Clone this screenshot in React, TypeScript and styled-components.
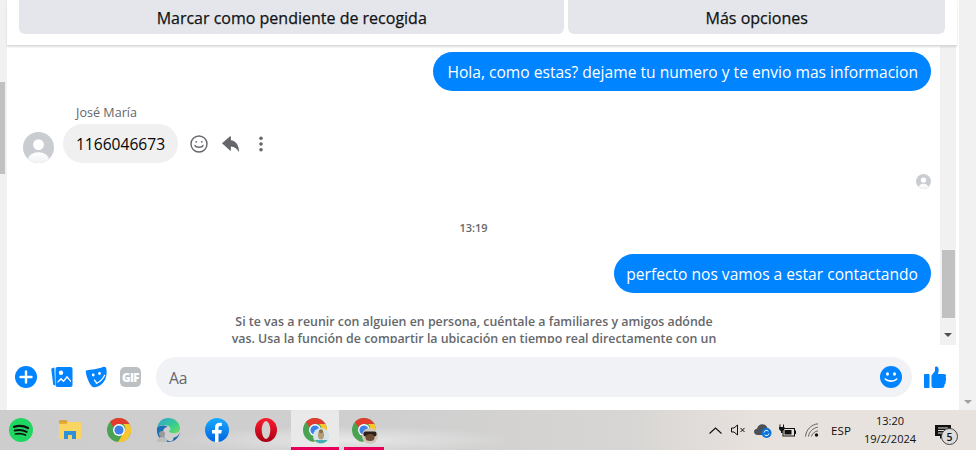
import React from "react";
import styled, { createGlobalStyle } from "styled-components";

const Global = createGlobalStyle`
  html, body { margin: 0; padding: 0; height: 450px; overflow: hidden; background: #fff; }
  #root { height: 450px; }
  * { box-sizing: border-box; }
  body { font-family: "Open Sans", "Noto Sans", "Liberation Sans", sans-serif; }
`;

const Page = styled.div`
  width: 976px; height: 450px; display: flex; flex-direction: column; overflow: hidden;
`;
const Browser = styled.div`
  height: 410px; display: flex; flex: none;
`;
const LeftRail = styled.div`
  width: 7px; background: #f1f1f1; padding-top: 82px; flex: none;
`;
const LeftThumb = styled.div`
  width: 5px; height: 92px; background: #c1c1c1;
`;
const OuterRail = styled.div`
  width: 17px; margin-left: 2px; background: #f1f1f1; flex: none; display: flex;
  flex-direction: column; justify-content: flex-end; align-items: center; padding-bottom: 6px;
`;
const ArrowDown = styled.div<{ $c: string }>`
  width: 0; height: 0; border-left: 4px solid transparent; border-right: 4px solid transparent;
  border-top: 4px solid ${(p) => p.$c};
`;
const Panel = styled.div`
  width: 950px; flex: none; display: flex; flex-direction: column; background: #fff;
`;
const Actions = styled.div`
  height: 46px; flex: none; display: flex; gap: 4px; padding: 0 12px 0 12px;
  border-bottom: 1px solid #d8d8d8; box-shadow: 0 1px 2px rgba(0,0,0,.12); position: relative;
`;
const ActionButton = styled.div<{ $w: number }>`
  width: ${(p) => p.$w}px; height: 34px; background: #e4e6eb; border-radius: 0 0 6px 6px;
  display: flex; align-items: center; justify-content: center;
  font-size: 16px; font-weight: 500; color: #111316; padding-top: 1px; -webkit-text-stroke: .25px #111316;
`;
const Middle = styled.div`
  height: 299px; flex: none; display: flex; align-items: flex-start; padding-right: 1px;
`;
const Thread = styled.div`
  width: 933px; height: 297px; flex: none; overflow: hidden; display: flex; flex-direction: column;
`;
const ScrollRail = styled.div`
  width: 17px; height: 299px; background: #f1f1f1; display: flex; flex-direction: column; align-items: center; padding-top: 204px;
`;
const ScrollThumb = styled.div`
  width: 13px; height: 68px; background: #c1c1c1;
`;
const ScrollArrow = styled.div`
  margin-top: 15px;
`;
const OutRow = styled.div<{ $top: number }>`
  display: flex; justify-content: flex-end; padding-right: 9px; margin-top: ${(p) => p.$top}px; flex: none;
`;
const OutBubble = styled.div<{ $left: number }>`
  height: 39px; border-radius: 20px; background: #0084ff; color: #fff; font-size: 15.6px;
  display: flex; align-items: center; padding: 0 13px 0 ${(p) => p.$left}px; white-space: nowrap;
`;
const SenderName = styled.div`
  font-size: 12.6px; color: #65676b; margin: 14px 0 0 69px; line-height: 16px; flex: none;
`;
const InRow = styled.div`
  display: flex; align-items: flex-end; margin: 3px 0 0 16px; flex: none;
`;
const InBubble = styled.div`
  height: 39px; width: 115px; margin-left: 9px; border-radius: 20px; background: #f0f0f0; color: #050505;
  font-size: 15.6px; display: flex; align-items: center; justify-content: center;
`;
const MsgTools = styled.div`
  display: flex; align-items: center; height: 39px; margin-left: 11px; gap: 11px; color: #65676b;
`;
const ToolSlot = styled.div`
  width: 20px; display: flex; justify-content: center; align-items: center;
`;
const SeenRow = styled.div`
  display: flex; justify-content: flex-end; padding-right: 9px; margin-top: 11px; flex: none; height: 15px;
`;
const TimeStamp = styled.div`
  text-align: center; font-size: 11px; font-weight: 600; color: #65676b; margin-top: 31px; line-height: 16px; flex: none;
`;
const Notice = styled.div`
  width: 490px; margin: 20px 0 0 222px; text-align: center; font-size: 12.4px; font-weight: 600;
  color: #65676b; line-height: 17px; flex: none; white-space: nowrap;
`;
const Composer = styled.div`
  height: 65px; flex: none; display: flex; align-items: center; padding: 0 0 1px 8px;
`;
const ComposerIcon = styled.div<{ $w: number; $ml: number }>`
  width: ${(p) => p.$w}px; margin-left: ${(p) => p.$ml}px; display: flex; align-items: center; justify-content: center; height: 24px;
`;
const GifTile = styled.div`
  width: 21px; height: 20px; border-radius: 5px; background: #bcc0c4; color: #fff; font-size: 11.5px;
  font-weight: 800; display: flex; align-items: center; justify-content: center; letter-spacing: -.6px;
`;
const InputBox = styled.div`
  width: 756px; height: 40px; margin-left: 15px; border-radius: 20px; background: #f0f2f5;
  display: flex; align-items: center; justify-content: space-between; padding: 0 10px 0 13px;
  color: #65676b; font-size: 15.6px;
`;
const Placeholder = styled.span`
  padding-top: 2px;
`;
const Taskbar = styled.div`
  height: 40px; flex: none; display: flex; align-items: stretch; justify-content: space-between;
  background:
    radial-gradient(170px 14px at 345px 30px, rgba(255,255,255,.5), rgba(255,255,255,0) 100%),
    linear-gradient(90deg, #cdcdcd 0%, #cfcfcf 40%, #d8d6d4 65%, #e8e2de 78%, #e8e2de 100%);
`;
const TaskApps = styled.div`
  display: flex;
`;
const TaskApp = styled.div<{ $active?: boolean; $w?: number; $bar?: boolean }>`
  width: ${(p) => p.$w ?? 49}px; height: 40px; display: flex; align-items: center; justify-content: center;
  padding-top: 3px; background: ${(p) => (p.$active ? "#e9e9e9" : "transparent")};
  border-bottom: 3px solid ${(p) => (p.$bar ? "#e6005c" : "transparent")};
`;
const SpotifySlot = styled(TaskApp)`
  padding-right: 3px;
`;
const Tray = styled.div`
  display: flex; align-items: center; padding-right: 1px; color: #111;
`;
const TrayItem = styled.div<{ $w: number }>`
  width: ${(p) => p.$w}px; display: flex; justify-content: center; align-items: center;
`;
const TrayText = styled.div`
  font-size: 11.6px; color: #111;
`;
const Clock = styled.div`
  width: 68px; text-align: center; font-size: 11px; line-height: 18px; color: #111;
`;
const Notify = styled.div`
  width: 40px; height: 30px; position: relative; margin-left: 11px; padding-top: 8px;
`;
const NotifyBadge = styled.div`
  position: absolute; left: 6px; top: 13px; width: 17px; height: 17px; border-radius: 50%;
  border: 1px solid #444; background: #ddd; font-size: 10.5px; font-weight: 600; display: flex;
  align-items: center; justify-content: center; color: #111;
`;
const ChromeSvg = styled.svg`
  overflow: visible;
`;

const Person = ({ size }: { size: number }) => (
  <svg width={size} height={size} viewBox="0 0 32 32">
    <defs>
      <linearGradient id={`pf${size}`} x1="0" y1="0" x2="0" y2="1">
        <stop offset="0" stopColor="#fff" /><stop offset="1" stopColor="#e9ebee" />
      </linearGradient>
      <clipPath id={`pc${size}`}><circle cx="16" cy="16" r="16" /></clipPath>
    </defs>
    <circle cx="16" cy="16" r="16" fill="#c9ccd1" />
    <g clipPath={`url(#pc${size})`}>
      <circle cx="16" cy="13" r="5.6" fill="#fff" />
      <ellipse cx="16" cy="29" rx="11" ry="8" fill={`url(#pf${size})`} />
    </g>
  </svg>
);

const Smile = () => (
  <svg width="18" height="18" viewBox="0 0 18 18" fill="none" stroke="#65676b" strokeWidth="1.4">
    <circle cx="9" cy="9" r="8" />
    <path d="M5 10.5c1 2.4 7 2.4 8 0" strokeLinecap="round" />
    <circle cx="6.2" cy="6.8" r=".9" fill="#65676b" stroke="none" />
    <circle cx="11.8" cy="6.8" r=".9" fill="#65676b" stroke="none" />
  </svg>
);
const Reply = () => (
  <svg width="17" height="16" viewBox="0 0 17 16" fill="#65676b">
    <path d="M0 7.200 8 .3c.4-.3.9 0 .9.500V4.200C13.500 4.500 17 9 17 15.500c0 .3-.3.400-.5.100C14.800 12.500 12.500 10.600 8.900 10.400v3.700c0 .5-.5.800-.9.500z" />
  </svg>
);
const Kebab = () => (
  <svg width="4" height="16" viewBox="0 0 4 16" fill="#65676b">
    <circle cx="2" cy="2.2" r="1.8" /><circle cx="2" cy="8" r="1.8" /><circle cx="2" cy="13.8" r="1.8" />
  </svg>
);
const Plus = () => (
  <svg width="22" height="22" viewBox="0 0 22 22">
    <circle cx="11" cy="11" r="11" fill="#0084ff" />
    <path d="M11 5.5v11M5.5 11h11" stroke="#fff" strokeWidth="2.4" strokeLinecap="round" />
  </svg>
);
const Photos = () => (
  <svg width="22" height="22" viewBox="0 0 22 22">
    <path d="M3.4 1.5 1 2.3c-.5.2-.8.7-.7 1.3l1.9 15c.1.5.5.8 1 .7l.9-.1z" fill="#0084ff" />
    <rect x="4.5" y="1" width="17" height="20" rx="2" fill="#0084ff" />
    <circle cx="10" cy="6.7" r="2.2" fill="#fff" />
    <path d="M6.5 15.500l3.500-3.800 2.500 2.500 3.500-4.400 4 5v1.400l-4-4.200-3.400 4.300-2.600-2.400-3.500 3.200z" fill="#fff" />
  </svg>
);
const Sticker = () => (
  <svg width="22" height="22" viewBox="0 0 22 22">
    <path d="M2 4.200C6 4 13 2.800 18 1c1.800-.6 3 .2 3.300 1.600.6 3.500.4 7-.8 10.200C18.600 17.500 14 21 9.500 21.300 8.400 21.400 7.500 21 6.700 20.200 4.300 17.600 1.800 12 .8 6 .6 5 1 4.300 2 4.200z" fill="#0084ff" />
    <circle cx="8.200" cy="9" r="1.400" fill="#fff" />
    <circle cx="14.500" cy="7.500" r="1.400" fill="#fff" />
    <path d="M10.800 17.500c3.800-1.200 7-4.300 9-8.500" stroke="#fff" strokeWidth="1.300" fill="none" />
    <path d="M9.500 14c.5 1.500 1.300 2.400 2.500 2.800" stroke="#fff" strokeWidth="1.300" fill="none" strokeLinecap="round" />
  </svg>
);
const BlueSmile = () => (
  <svg width="22" height="22" viewBox="0 0 22 22">
    <circle cx="11" cy="11" r="11" fill="#0084ff" />
    <ellipse cx="7.500" cy="8" rx="1.500" ry="1.800" fill="#fff" />
    <ellipse cx="14.500" cy="8" rx="1.500" ry="1.800" fill="#fff" />
    <path d="M5.200 13c2.500 2.800 9 2.800 11.600 0" stroke="#fff" strokeWidth="1.600" fill="none" strokeLinecap="round" />
  </svg>
);
const ThumbUp = () => (
  <svg width="22" height="22" viewBox="0 0 22 22" fill="#0084ff">
    <rect x="0" y="8" width="5.500" height="14" rx=".8" />
    <path d="M7.500 9.500 11 5V1.500C11 .3 14-.6 14.600 3c.3 2-.4 3.700-.6 5h6c2 0 2.500 2 1.500 3 1 1 1 3-.1 4 .6 1.500 0 3-1 3.500.4 1.500-.5 3.500-2.400 3.500H10c-1.500 0-2.500-1-2.500-2z" />
  </svg>
);

const Spotify = () => (
  <svg width="24" height="24" viewBox="0 0 24 24" fill="none" stroke="#111" strokeLinecap="round">
    <circle cx="12" cy="12" r="12" fill="#1ed760" stroke="none" />
    <path d="M5 8.800c4.500-1.300 9.800-1 14 1.200" strokeWidth="2.300" />
    <path d="M5.800 12.500c4-1 8.300-.6 11.900 1.300" strokeWidth="2" />
    <path d="M6.500 16c3.500-.8 7-.5 10 1.100" strokeWidth="1.700" />
  </svg>
);
const Folder = () => (
  <svg width="22" height="20" viewBox="0 0 22 20">
    <path d="M0 1.500C0 .7.500.2 1.200.2h6l1.800 2h-9z" fill="#d79c2c" />
    <rect x="0" y="2" width="22" height="17" rx="1" fill="#fbd561" />
    <path d="M0 2h9L7.500 4H0z" fill="#e8ad36" />
    <rect x="5" y="11" width="12" height="8" fill="#2f8fd8" />
    <rect x="9" y="15" width="4" height="4" fill="#fbd561" />
  </svg>
);
const ChromeMark = () => (
  <>
    <circle cx="12" cy="12" r="12" fill="#4aa352" />
    <path d="M12 0a12 12 0 0 1 10.400 6H12a6 6 0 0 0-5.500 3.500L3 3.800A12 12 0 0 1 12 0z" fill="#e33b2e" />
    <path d="M22.400 6A12 12 0 0 1 11 24l5.500-9a6 6 0 0 0-.3-9z" fill="#fbc52d" />
    <circle cx="12" cy="12" r="6" fill="#fff" />
    <circle cx="12" cy="12" r="4.600" fill="#3f7fe8" />
  </>
);
const Chrome = () => (
  <svg width="24" height="24" viewBox="0 0 24 24"><ChromeMark /></svg>
);
const Edge = () => (
  <svg width="24" height="24" viewBox="0 0 24 24">
    <defs>
      <linearGradient id="eg" x1="0" y1="0" x2="1" y2="1">
        <stop offset="0" stopColor="#2d9fd9" /><stop offset=".6" stopColor="#3ad08a" /><stop offset="1" stopColor="#72dc5e" />
      </linearGradient>
    </defs>
    <path d="M1 10C2 4 6.500 0 12 0c7 0 12 5 12 10.500 0 3.200-3 4.700-6 4.700-3 0-5-.9-5-2.200 2-1 2-3.700-.5-5C8 6 3 7 1 10z" fill="url(#eg)" />
    <path d="M1 10c2.500-3 8-3 10.500-1C8 9 6 13 7.500 17.500c1 3 4 6 8.500 6-1.200.3-2.700.5-4 .5C5 24 0 18 1 10z" fill="#1b6fb5" />
    <path d="M24 14c-1 6-6 10-11 9.700 3 0 5-2 4.500-4.200 3 0 5.500-2.500 6.500-5.500z" fill="#1464a8" />
    <circle cx="6" cy="16" r="3" fill="#9a9a9a" />
    <path d="M1 24c0-3.500 2-5 5-5s5 1.500 5 5z" fill="#bdbdbd" />
  </svg>
);
const Facebook = () => (
  <svg width="24" height="24" viewBox="0 0 24 24">
    <defs>
      <linearGradient id="fb" x1="0" y1="0" x2="0" y2="1">
        <stop offset="0" stopColor="#18acfe" /><stop offset="1" stopColor="#0163e0" />
      </linearGradient>
    </defs>
    <circle cx="12" cy="12" r="12" fill="url(#fb)" />
    <path d="M10 24v-8.500H7V12h3V9.300C10 6.300 11.800 4.700 14.500 4.700c1.300 0 2.400.2 2.400.2v3h-1.500c-1.500 0-1.900.9-1.900 1.800V12h3.300l-.5 3.500h-2.800V24z" fill="#fff" />
  </svg>
);
const Opera = () => (
  <svg width="22" height="24" viewBox="0 0 22 24">
    <defs>
      <linearGradient id="op" x1="0" y1="0" x2="0" y2="1">
        <stop offset="0" stopColor="#ff1b2d" /><stop offset="1" stopColor="#a70014" />
      </linearGradient>
    </defs>
    <ellipse cx="11" cy="12" rx="11" ry="12" fill="url(#op)" />
    <ellipse cx="11" cy="12" rx="4.300" ry="9" fill="#d4d0ce" />
  </svg>
);
const ChromeWithBadge = ({ kind }: { kind: "a" | "b" }) => (
  <ChromeSvg width="24" height="24" viewBox="0 0 24 24">
    <ChromeMark />
    <circle cx="18" cy="18" r="8" fill={kind === "a" ? "#d5e4e6" : "#cfc9bd"} />
    {kind === "a" ? (
      <>
        <path d="M11.500 22h13a8 8 0 0 1-13 0z" fill="#45b0b4" />
        <ellipse cx="18" cy="17" rx="3" ry="4.500" fill="#b59a74" />
        <circle cx="18" cy="13.300" r="2" fill="#8a6f4d" />
      </>
    ) : (
      <>
        <rect x="11.500" y="13.500" width="13" height="5" rx="2" fill="#2c1f18" />
        <ellipse cx="18" cy="19.500" rx="4.500" ry="3.500" fill="#6d4a33" />
      </>
    )}
  </ChromeSvg>
);

const Chevron = () => (
  <svg width="13" height="7" viewBox="0 0 13 7" fill="none" stroke="#111" strokeWidth="1.100">
    <path d="M.5 6.500 6.500 1l6 5.500" />
  </svg>
);
const Speaker = () => (
  <svg width="15" height="12" viewBox="0 0 15 12" fill="none" stroke="#111" strokeWidth="1">
    <path d="M.5 4h2.500L6.500 1v10L3 8H.5z" />
    <path d="M9.500 4l4 4m0-4-4 4" />
  </svg>
);
const CloudSync = () => (
  <svg width="18" height="15" viewBox="0 0 18 15">
    <path d="M3.500 12C1.500 12 0 10.700 0 8.800 0 7 1.300 5.800 3 5.700 3.600 3 5.700 1.300 8.300 1.300c2.700 0 4.900 1.800 5.300 4.300C15.500 6 16.500 7 16.500 8v1H8v3z" fill="#4b5157" />
    <circle cx="12.500" cy="10" r="5" fill="#0a74da" />
    <path d="M10 9.500a2.600 2.600 0 0 1 4.400-1.300M15 10.500a2.600 2.600 0 0 1-4.400 1.300" stroke="#fff" strokeWidth="1" fill="none" />
  </svg>
);
const BatteryPlug = () => (
  <svg width="17" height="13" viewBox="0 0 17 13">
    <path d="M1 .5v2.500M4.500.5v2.500" stroke="#111" strokeWidth="1" />
    <path d="M0 3h5.500v1.500a2.700 2.700 0 0 1-2 2.500v2H2V7A2.700 2.700 0 0 1 0 4.500z" fill="#111" />
    <rect x="4" y="4.500" width="11.500" height="7.500" fill="none" stroke="#111" strokeWidth="1" />
    <rect x="5.500" y="6" width="7" height="4.500" fill="#111" />
    <rect x="15.500" y="6.500" width="1.500" height="3.500" fill="#111" />
  </svg>
);
const Wifi = () => (
  <svg width="15" height="14" viewBox="0 0 15 14" fill="none" stroke="#555" strokeWidth=".9">
    <path d="M.5 13.500C1 7 6 1.500 13 .8" />
    <path d="M3.500 13.500C4 9 8 4.800 13 4.200" />
    <path d="M6.500 13.500C7 11 9.500 8.300 13 7.800" />
    <circle cx="11.500" cy="12" r="1.700" fill="#111" stroke="none" />
  </svg>
);
const Bubble = () => (
  <svg width="16" height="15" viewBox="0 0 16 15">
    <path d="M0 0h16v11H8l-3 3v-3H0z" fill="#111" />
    <path d="M3 3h10M3 5.500h10M3 8h7" stroke="#e8e2de" strokeWidth="1" />
  </svg>
);

export default function App() {
  return (
    <Page>
      <Global />
      <Browser>
        <LeftRail><LeftThumb /></LeftRail>
        <Panel>
          <Actions>
            <ActionButton $w={546}>Marcar como pendiente de recogida</ActionButton>
            <ActionButton $w={377}>Más opciones</ActionButton>
          </Actions>
          <Middle>
            <Thread>
              <OutRow $top={6}><OutBubble $left={14}>Hola, como estas? dejame tu numero y te envio mas informacion</OutBubble></OutRow>
              <SenderName>José María</SenderName>
              <InRow>
                <Person size={31} />
                <InBubble>1166046673</InBubble>
                <MsgTools>
                  <ToolSlot><Smile /></ToolSlot>
                  <ToolSlot><Reply /></ToolSlot>
                  <ToolSlot><Kebab /></ToolSlot>
                </MsgTools>
              </InRow>
              <SeenRow><Person size={15} /></SeenRow>
              <TimeStamp>13:19</TimeStamp>
              <OutRow $top={18}><OutBubble $left={12}>perfecto nos vamos a estar contactando</OutBubble></OutRow>
              <Notice>
                Si te vas a reunir con alguien en persona, cuéntale a familiares y amigos adónde<br />
                vas. Usa la función de compartir la ubicación en tiempo real directamente con un
              </Notice>
            </Thread>
            <ScrollRail>
              <ScrollThumb />
              <ScrollArrow><ArrowDown $c="#505050" /></ScrollArrow>
            </ScrollRail>
          </Middle>
          <Composer>
            <ComposerIcon $w={22} $ml={0}><Plus /></ComposerIcon>
            <ComposerIcon $w={22} $ml={14}><Photos /></ComposerIcon>
            <ComposerIcon $w={22} $ml={12}><Sticker /></ComposerIcon>
            <ComposerIcon $w={21} $ml={13}><GifTile>GIF</GifTile></ComposerIcon>
            <InputBox><Placeholder>Aa</Placeholder><BlueSmile /></InputBox>
            <ComposerIcon $w={22} $ml={12}><ThumbUp /></ComposerIcon>
          </Composer>
        </Panel>
        <OuterRail><ArrowDown $c="#a0a0a0" /></OuterRail>
      </Browser>
      <Taskbar>
        <TaskApps>
          <SpotifySlot $w={45}><Spotify /></SpotifySlot>
          <TaskApp><Folder /></TaskApp>
          <TaskApp><Chrome /></TaskApp>
          <TaskApp><Edge /></TaskApp>
          <TaskApp><Facebook /></TaskApp>
          <TaskApp><Opera /></TaskApp>
          <TaskApp $w={1} />
          <TaskApp $active $bar $w={48}><ChromeWithBadge kind="a" /></TaskApp>
          <TaskApp $w={5} />
          <TaskApp $bar $w={40}><ChromeWithBadge kind="b" /></TaskApp>
        </TaskApps>
        <Tray>
          <TrayItem $w={22}><Chevron /></TrayItem>
          <TrayItem $w={24}><Speaker /></TrayItem>
          <TrayItem $w={26}><CloudSync /></TrayItem>
          <TrayItem $w={22}><BatteryPlug /></TrayItem>
          <TrayItem $w={28}><Wifi /></TrayItem>
          <TrayItem $w={30}><TrayText>ESP</TrayText></TrayItem>
          <Clock>13:20<br />19/2/2024</Clock>
          <Notify>
            <Bubble />
            <NotifyBadge>5</NotifyBadge>
          </Notify>
        </Tray>
      </Taskbar>
    </Page>
  );
}
